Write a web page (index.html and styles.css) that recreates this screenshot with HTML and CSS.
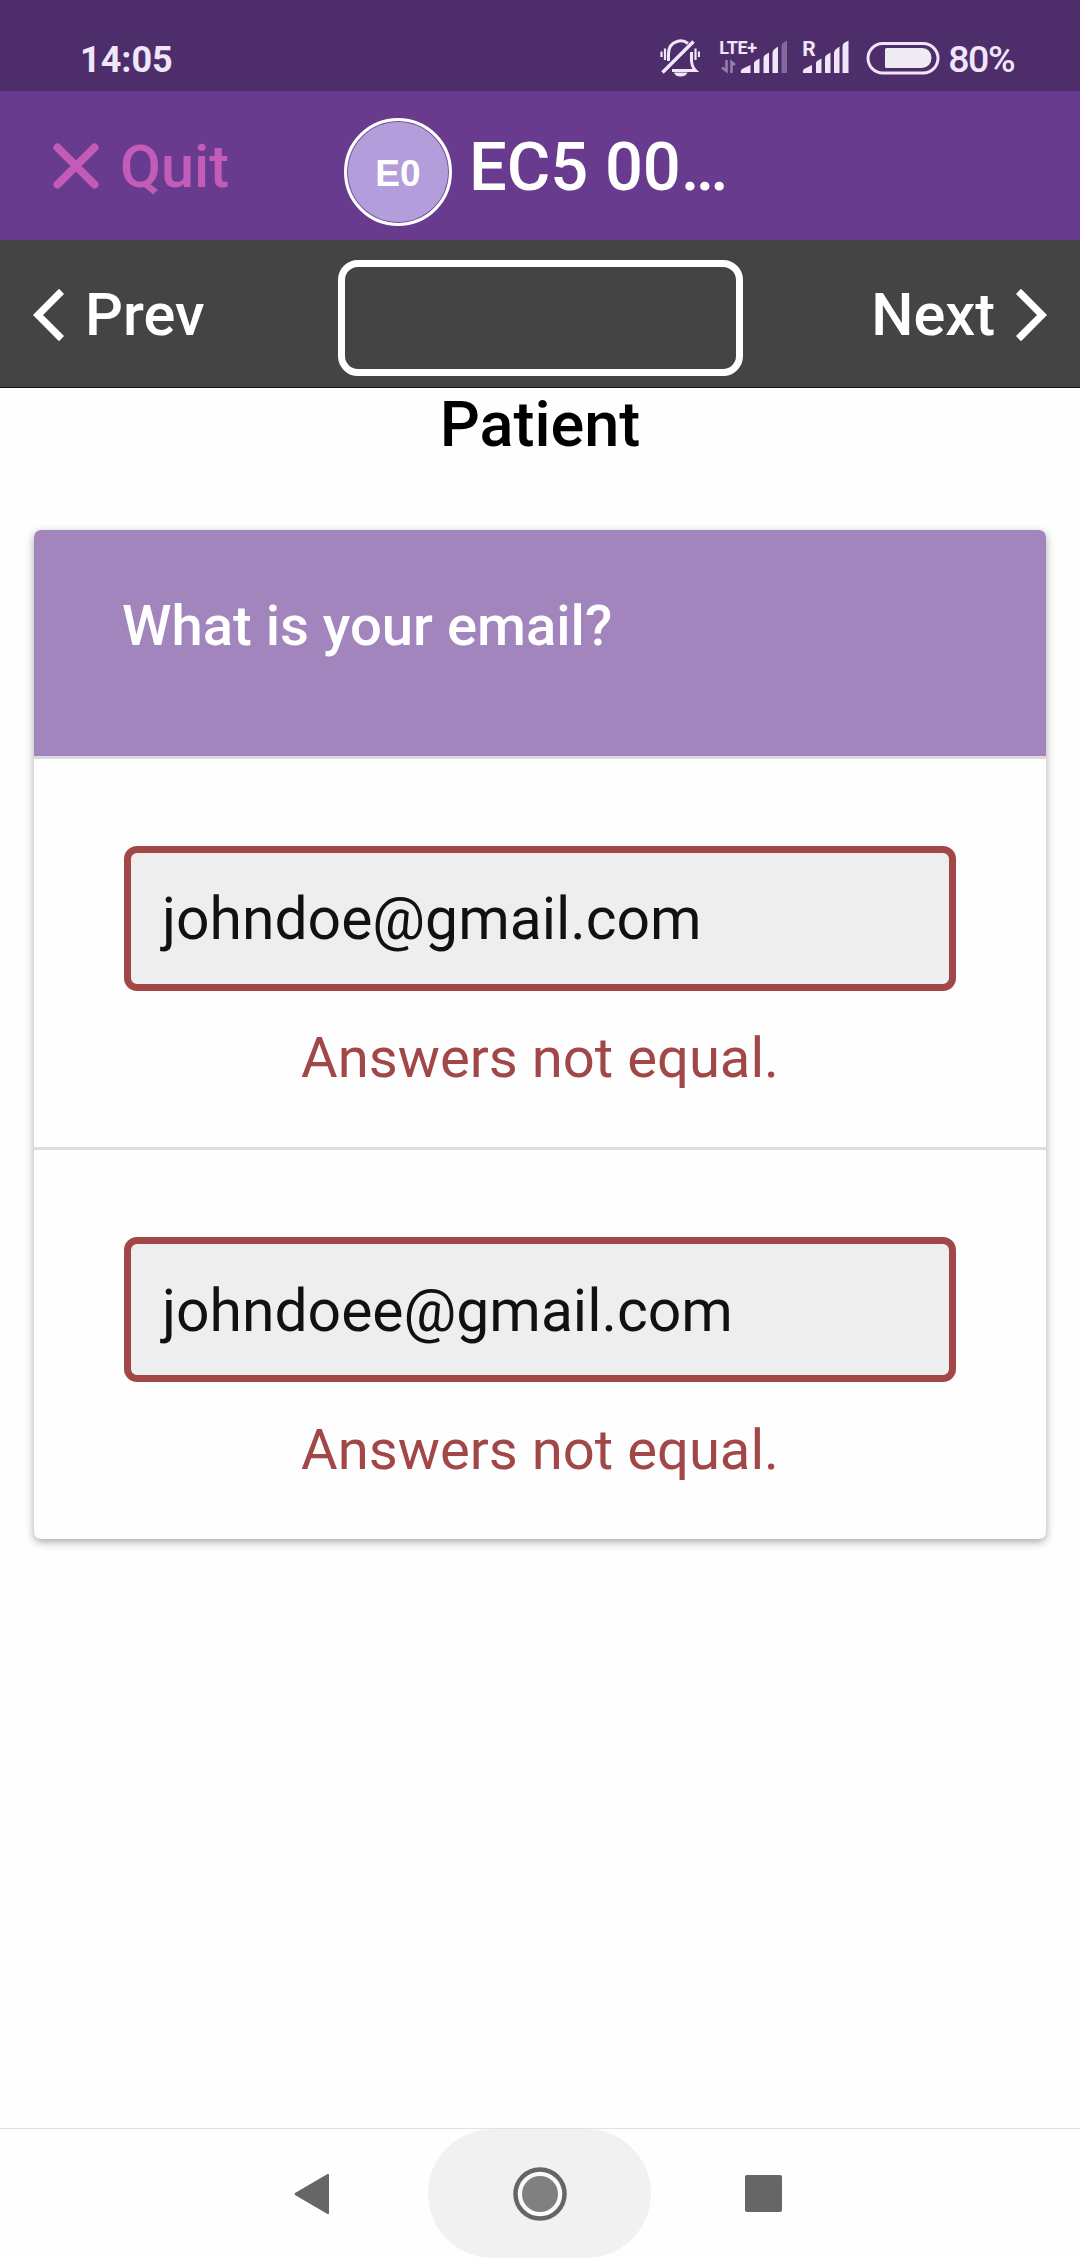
FILE: index.html
```html
<!DOCTYPE html>
<html lang="en">
<head>
<meta charset="utf-8">
<title>EC5 form entry</title>
<link rel="stylesheet" href="styles.css">
</head>
<body>
<div class="screen">
  <div class="status">
    <span class="clock">14:05</span>
    <div class="status-icons">
      <svg class="bell" width="40" height="38" viewBox="0 0 40 38" fill="none" stroke="#efe6f8" stroke-width="3">
        <path d="M8.500 22V15C8.500 8 12 4 17 2.500Q23 0.500 28 4.500M31.500 13V22Q32 28 35.500 31.500H12"/>
        <path d="M2.500 33.500L33.500 2.500" stroke-width="3.500"/>
        <path d="M14 33.500H27.500Q26 37.500 20.500 37.500T14 33.500Z" fill="#efe6f8" stroke="none"/>
        <path d="M5 9.500V21M1.500 12.500V18M35.500 9.500V21M39 12.500V18" stroke-width="2.200"/>
      </svg>
      <div class="signal lte">
        <span class="network">LTE+</span>
        <svg width="68" height="34" viewBox="0 0 68 34" fill="#efe6f8">
          <path d="M22 33Q21 31 23 29L31.500 25V33Z"/>
          <path d="M35 23Q35 21.500 37 20.500L40.500 18.500V33H35ZM44.500 18Q44.500 16 46 15L50 12.500V33H44.500ZM53.500 13Q53.500 11 55 9.500L59 6.500V33H53.500Z"/>
          <path d="M62.500 7Q62.500 4 64 3L68 0.500V33H62.500Z" fill="#846b9c"/>
          <path d="M7.500 20V31L3 27.500M12.500 33V22L16 25" fill="none" stroke="#9580ae" stroke-width="2.500"/>
        </svg>
      </div>
      <div class="signal roaming">
        <span class="network">R</span>
        <svg width="47" height="34" viewBox="0 0 47 34" fill="#efe6f8">
          <path d="M1 33Q0 31 2 29L10 25V33ZM14 23Q14 21.500 16 20.500L19.500 18.500V33H14ZM23 18Q23 16 24.500 15L28.500 12.500V33H23ZM32 13Q32 11 33.500 9.500L37.500 6.500V33H32ZM40.500 7Q40.500 4 42 3L46.500 0.500V33H40.500Z"/>
        </svg>
      </div>
      <svg class="battery" width="74" height="34" viewBox="0 0 74 34">
        <rect x="2" y="2.500" width="70" height="29.500" rx="14.750" fill="none" stroke="#efe6f8" stroke-width="3"/>
        <path d="M20.500 7H56Q65 7.500 65.500 17Q65 26 56 27H20.500Q19 27 19 25.500V8.500Q19 7 20.500 7Z" fill="#eeebf2"/>
      </svg>
      <span class="percent">80%</span>
    </div>
  </div>

  <header class="header">
    <a class="quit">
      <svg width="46" height="46" viewBox="0 0 46 46" stroke="#c25cb7" stroke-width="8" stroke-linecap="round"><path d="M4.500 4.500L41.500 41.500M41.500 4.500L4.500 41.500"/></svg>
      <span>Quit</span>
    </a>
    <div class="project">
      <span class="avatar">E0</span>
      <h1 class="title">EC5 00…</h1>
    </div>
  </header>

  <nav class="toolbar">
    <a class="step prev">
      <svg width="31" height="54" viewBox="0 0 31 54" fill="#fff"><path d="M26 0.700L31 6L10 27L31 48L26 53.300L0 27Z"/></svg>
      <span>Prev</span>
    </a>
    <div class="progress"></div>
    <a class="step next">
      <span>Next</span>
      <svg width="31" height="54" viewBox="0 0 31 54" fill="#fff"><path d="M5 0.700L0 6L21 27L0 48L5 53.300L31 27Z"/></svg>
    </a>
  </nav>

  <main class="content">
    <h2 class="form-name">Patient</h2>
    <section class="card">
      <div class="question"><span>What is your email?</span></div>
      <div class="answer">
        <div class="field"><span>johndoe@gmail.com</span></div>
        <p class="error">Answers not equal.</p>
      </div>
      <div class="answer">
        <div class="field"><span>johndoee@gmail.com</span></div>
        <p class="error">Answers not equal.</p>
      </div>
    </section>
  </main>

  <footer class="system-nav">
    <span class="key back"><svg width="36" height="42" viewBox="0 0 36 42"><path d="M33.500 1L1 20Q0 21 1 22L33.500 41Q35 41.500 35 40V2Q35 0.500 33.500 1Z" fill="#666"/></svg></span>
    <span class="key home"><svg width="54" height="56" viewBox="0 0 54 56"><circle cx="27" cy="28" r="24.500" fill="#fafafa" stroke="#666" stroke-width="4.500"/><circle cx="27" cy="28" r="18" fill="#808080"/></svg></span>
    <span class="key recents"><svg width="37" height="37" viewBox="0 0 37 37"><rect width="37" height="37" rx="2" fill="#666"/></svg></span>
  </footer>
</div>
</body>
</html>
```

FILE: styles.css
```css
* { box-sizing: border-box; }

body {
  margin: 0;
  background: #fefefe;
  font-family: Roboto, sans-serif;
}

h1, h2, p { margin: 0; }
svg { display: block; flex: none; }

.screen {
  display: flex;
  flex-direction: column;
  height: 2258px;
}

.status {
  display: flex;
  justify-content: space-between;
  height: 91px;
  padding: 38px 66px 0 80px;
  background: #4e2d6b;
  color: #efe6f8;
}

.clock {
  font-size: 36px;
  font-weight: 700;
  line-height: 45px;
}

.status-icons { display: flex; }
.bell { margin: 1px 19px 0 0; }
.signal {
  display: grid;
  height: 34px;
  margin-top: 2px;
}
.signal > * { grid-area: 1 / 1; }
.network { font-weight: 700; }
.lte { margin-right: 15px; }
.lte .network {
  font-size: 18px;
  line-height: 16px;
  letter-spacing: -0.3px;
}
.roaming { margin-right: 17px; }
.roaming .network {
  font-size: 21px;
  line-height: 18px;
}
.battery { margin: 3px 8px 0 0; }
.percent {
  font-size: 37.5px;
  font-weight: 500;
  line-height: 42px;
  letter-spacing: -1.5px;
}

.header {
  display: flex;
  align-items: flex-start;
  height: 149px;
  background: #693b8f;
}
.quit {
  display: flex;
  gap: 21px;
  width: 344px;
  padding: 52px 0 0 53px;
  color: #c25cb7;
  font-size: 59.5px;
  font-weight: 500;
}
.quit span { line-height: 48px; }
.project { display: flex; gap: 17px; }
.avatar {
  width: 108px;
  height: 108px;
  margin-top: 27px;
  border: 3px solid #fff;
  border-radius: 50%;
  background: #b39ddb;
  box-shadow: inset 0 0 0 1px #6f5693;
  color: #fff;
  font: bold 37px/106px "Liberation Sans", sans-serif;
  text-align: center;
}
.title {
  padding-top: 36px;
  color: #fff;
  font-size: 66.8px;
  font-weight: 500;
  line-height: 80px;
}

.toolbar {
  display: grid;
  grid-template-columns: 338px 405px 1fr;
  height: 148px;
  padding-top: 20px;
  border-bottom: 1px solid #111;
  background: #444;
  color: #fff;
}
.step {
  display: flex;
  gap: 21px;
  padding: 28px 33px 0;
  font-size: 59.5px;
  font-weight: 500;
}
.step span { line-height: 55px; }
.next { justify-content: flex-end; }
.progress {
  height: 116px;
  border: 7px solid #fff;
  border-radius: 20px;
}

.content { flex: 1; padding: 0 34px; }
.form-name {
  height: 142px;
  color: #000;
  font-size: 63px;
  font-weight: 500;
  line-height: 73px;
  text-align: center;
}

.card {
  overflow: hidden;
  height: 1009px;
  border-radius: 7px;
  background: #fefefe;
  box-shadow: 0 3px 9px rgba(0, 0, 0, .34);
}
.question {
  height: 229px;
  padding: 62px 88px;
  border-bottom: 3px solid #ddd8e2;
  background: #a285bc;
  color: #fff;
  font-size: 56.2px;
  font-weight: 500;
  line-height: 68px;
}
.answer {
  height: 391px;
  padding: 87px 90px 0;
  border-bottom: 3px solid #ddd;
}
.answer:last-child { border-bottom: 0; }
.field {
  height: 145px;
  padding: 0 31px;
  border: 7px solid #a24747;
  border-radius: 13px;
  background: #eee;
  color: #111;
  font-size: 58.8px;
  line-height: 131px;
}
.answer:last-child .field { line-height: 133px; }
.error {
  padding-top: 33px;
  color: #a24747;
  font-size: 56.2px;
  line-height: 68px;
  text-align: center;
}
.answer:last-child .error { padding-top: 34px; }

.system-nav {
  display: flex;
  justify-content: center;
  height: 130px;
  padding-right: 2px;
  border-top: 1px solid #e2e2e2;
}
.key {
  display: flex;
  align-items: center;
  justify-content: center;
  width: 223px;
}
.back { padding-right: 8px; }
.home {
  padding-left: 2px;
  border-radius: 65px;
  background: #f1f1f1;
}
.recents { padding-left: 2px; }
```
